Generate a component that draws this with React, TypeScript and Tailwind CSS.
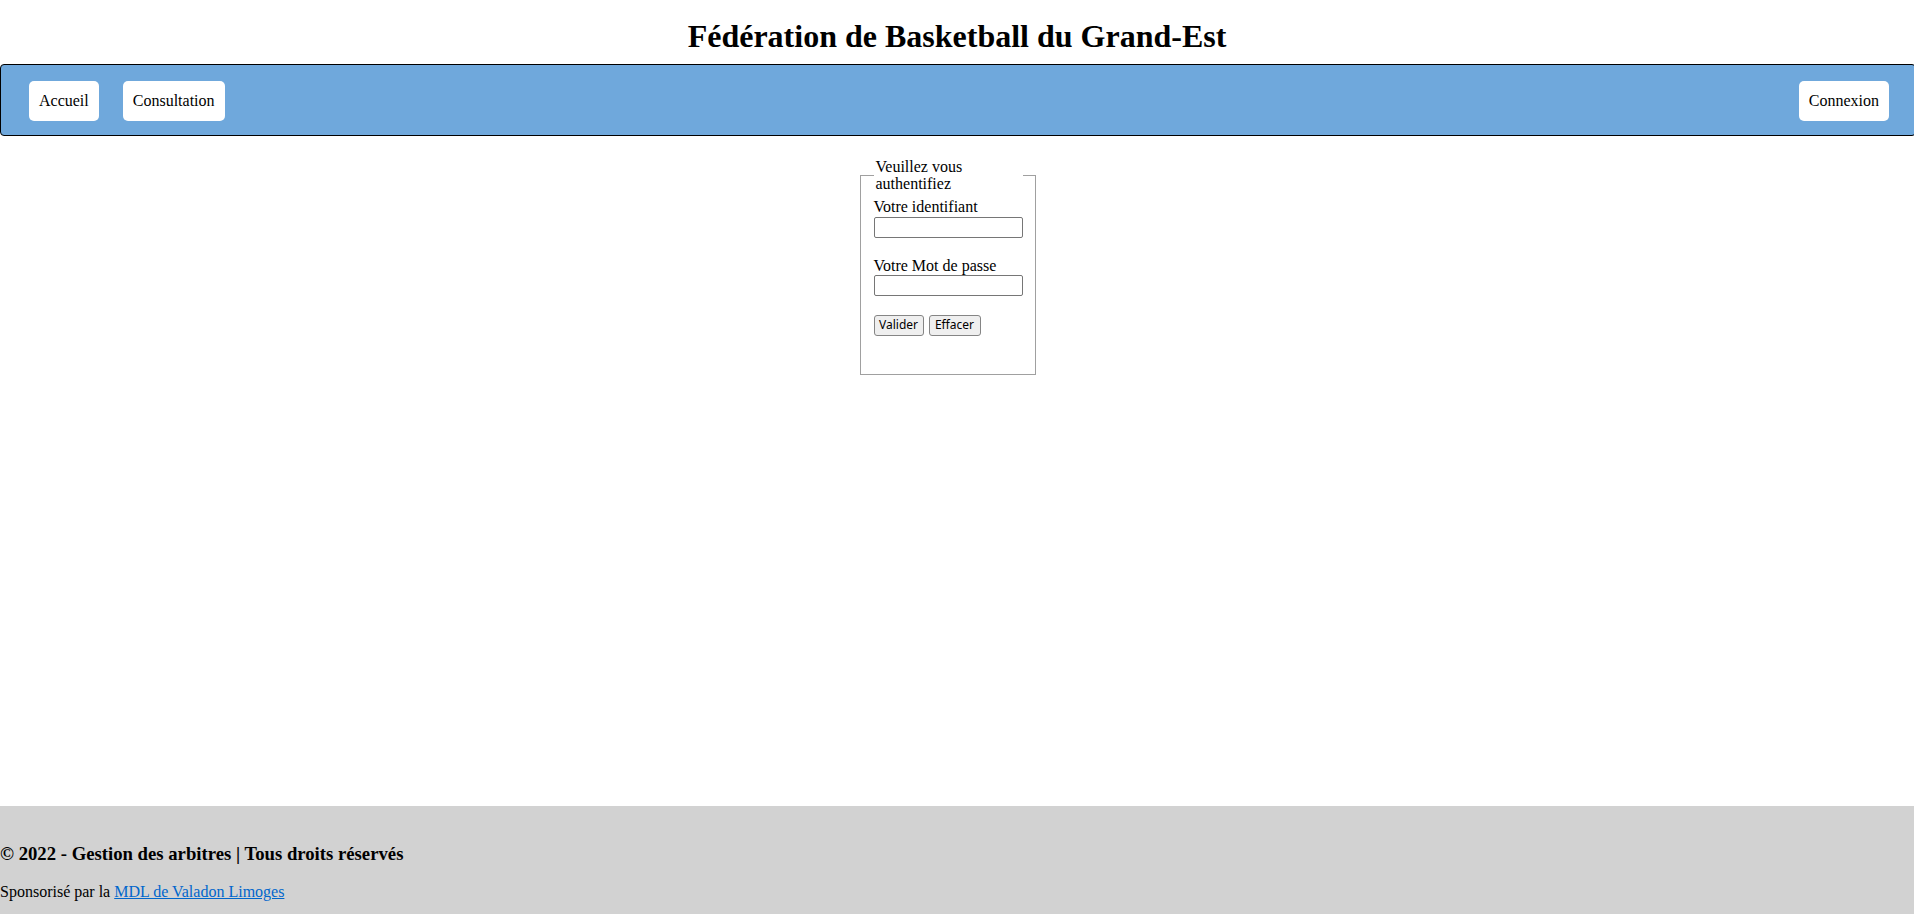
import React from "react";

export default function App() {
  return (
    <div className="min-h-screen overflow-hidden bg-white font-['Liberation_Serif','Times_New_Roman',serif] text-[16px] text-black">
      <header>
        <h1 className="pt-[17.5px] pb-[9.5px] text-center text-[32px] font-bold leading-[37px]">
          Fédération de Basketball du Grand-Est
        </h1>
        <nav className="flex w-[calc(100%+2px)] items-center justify-between rounded-[4px] border border-black bg-[#6fa8dc] pl-[28px] pr-[26px] pt-[16px] pb-[14px]">
          <div className="flex gap-[24px]">
            <a href="#" className="flex h-[40px] items-center rounded-[5px] bg-white px-[10px] leading-[18px]">
              Accueil
            </a>
            <a href="#" className="flex h-[40px] items-center rounded-[5px] bg-white px-[10px] leading-[18px]">
              Consultation
            </a>
          </div>
          <a href="#" className="flex h-[40px] items-center rounded-[5px] bg-white px-[10px] leading-[18px]">
            Connexion
          </a>
        </nav>
      </header>

      <main className="flex h-[670px] justify-center pt-[22px] pr-[19px]">
        <form onSubmit={(e) => e.preventDefault()}>
          <fieldset className="w-[176px] border border-[#a0a0a0] pl-[13px] pr-[12px] pt-[5.5px] pb-[38.5px]">
            <legend className="px-[2px] leading-[17px]">Veuillez vous authentifiez</legend>
            <label className="block leading-[17px]">Votre identifiant</label>
            <input
              type="text"
              className="mt-[2px] block h-[21px] w-[149px] rounded-[2px] border border-[#767676] bg-white px-[2px] text-[13px]"
            />
            <label className="mt-[19px] block leading-[17px]">Votre Mot de passe</label>
            <input
              type="password"
              className="mt-[1px] block h-[21px] w-[149px] rounded-[2px] border border-[#767676] bg-white px-[2px] text-[13px]"
            />
            <div className="mt-[19px] flex gap-[5px] font-['Noto_Sans','Liberation_Sans',sans-serif] text-[12px]">
              <button
                type="submit"
                className="flex h-[21px] w-[50px] items-center justify-center rounded-[3px] border border-[#858585] bg-[#efefef] leading-none"
              >
                Valider
              </button>
              <button
                type="reset"
                className="flex h-[21px] w-[52px] items-center justify-center rounded-[3px] border border-[#858585] bg-[#efefef] leading-none"
              >
                Effacer
              </button>
            </div>
          </fieldset>
        </form>
      </main>

      <footer className="bg-[#d2d2d2] pt-[36.5px] pb-[16px]">
        <h3 className="text-[18.72px] font-bold leading-[21.5px]">
          © 2022 - Gestion des arbitres | Tous droits réservés
        </h3>
        <p className="mt-[18.8px] leading-[18.4px]">
          Sponsorisé par la{" "}
          <a href="#" className="text-[#0066cc] underline">
            MDL de Valadon Limoges
          </a>
        </p>
      </footer>
    </div>
  );
}
